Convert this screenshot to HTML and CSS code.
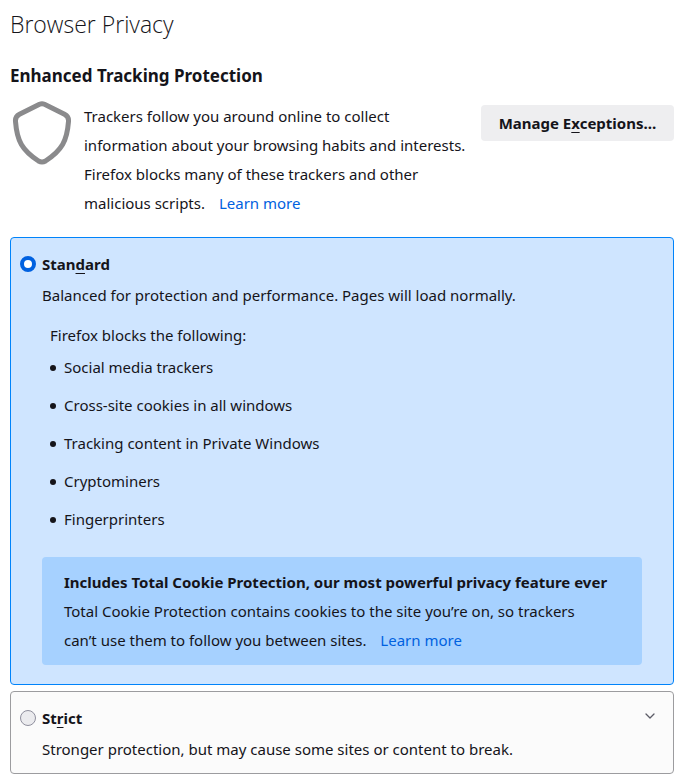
FILE: index.html
```html
<!DOCTYPE html>
<html lang="en">
<head>
<meta charset="utf-8">
<meta name="viewport" content="width=device-width, initial-scale=1">
<title>Browser Privacy</title>
<link rel="stylesheet" href="styles.css">
</head>
<body>
<main class="page">
  <h1 class="title">Browser Privacy</h1>
  <h2 class="subtitle">Enhanced Tracking Protection</h2>
  <section class="intro">
    <svg class="shield" viewBox="0 0 64 64" aria-hidden="true">
      <path d="M29.500 3.200 9.500 13.200Q5 15.500 5.500 20.500C7 40 12 49 28.500 60Q32 62 35.500 60C52 49 57 40 58.500 20.500Q59 15.500 54.500 13.200L34.500 3.200Q32 2.200 29.500 3.200Z"/>
    </svg>
    <p class="text">Trackers follow you around online to collect information about your browsing habits and interests. Firefox blocks many of these trackers and other malicious scripts. <a class="link" href="#">Learn more</a></p>
    <button class="button" type="button">Manage E<u>x</u>ceptions…</button>
  </section>
  <section class="card selected">
    <div class="choice">
      <input class="radio" type="radio" name="level" id="standard" checked>
      <label class="label" for="standard">Stan<u>d</u>ard</label>
    </div>
    <div class="body">
      <p class="text">Balanced for protection and performance. Pages will load normally.</p>
      <p class="text lead">Firefox blocks the following:</p>
      <ul class="list">
        <li>Social media trackers</li>
        <li>Cross-site cookies in all windows</li>
        <li>Tracking content in Private Windows</li>
        <li>Cryptominers</li>
        <li>Fingerprinters</li>
      </ul>
      <div class="notice">
        <h3 class="notice-title">Includes Total Cookie Protection, our most powerful privacy feature ever</h3>
        <p class="text">Total Cookie Protection contains cookies to the site you’re on, so trackers can’t use them to follow you between sites. <a class="link" href="#">Learn more</a></p>
      </div>
    </div>
  </section>
  <section class="card">
    <div class="choice">
      <input class="radio" type="radio" name="level" id="strict">
      <label class="label" for="strict">St<u>r</u>ict</label>
      <button class="expander" type="button" aria-label="Show details">
        <svg class="chevron" viewBox="0 0 16 16" aria-hidden="true"><path d="M4 6l4 4 4-4"/></svg>
      </button>
    </div>
    <div class="body">
      <p class="text">Stronger protection, but may cause some sites or content to break.</p>
    </div>
  </section>
</main>
</body>
</html>
```
FILE: styles.css
```css
* { box-sizing: border-box; }
body {
  margin: 0;
  background: #fff;
  color: #15141a;
  font: 15px/29px "Noto Sans", sans-serif;
}
h1, h2, h3, p, ul { margin: 0; }
u { text-decoration-thickness: 1px; text-underline-offset: 3px; text-decoration-skip-ink: none; }
.page { padding: 8px 10px 5px; }
.title { font-family: "Open Sans", "Noto Sans", sans-serif; font-size: 23px; font-weight: 300; line-height: 32px; }
.subtitle { margin-top: 21px; font-size: 17px; font-weight: 700; line-height: 30px; }
.intro { display: flex; align-items: flex-start; padding-top: 11px; }
.intro .text { flex: 1; min-width: 0; }
.shield { flex: none; width: 64px; height: 64px; margin: -1px 10px 0 0; }
.shield path { fill: none; stroke: #8a8a8c; stroke-width: 5; }
.link { margin-left: 10px; color: #0061e0; text-decoration: none; }
.button {
  flex: none;
  margin: 3px 0 0 10px;
  padding: 0 16px;
  min-width: 193px;
  height: 36px;
  border: 0;
  border-radius: 4px;
  background: #eeeef0;
  color: inherit;
  font: 700 15px/36px "Noto Sans", sans-serif;
}
.card {
  margin-top: 6px;
  padding: 12px 31px 9px;
  border: 1px solid #9c9c9f;
  border-radius: 4px;
  background: #fbfbfb;
}
.selected {
  margin-top: 19px;
  padding-bottom: 19px;
  border-color: #0083fa;
  background: #cfe5ff;
}
.choice { display: flex; align-items: center; margin: 0 -22px 2px; }
.radio {
  appearance: none;
  width: 16px;
  height: 16px;
  margin: 0 6px 2px 0;
  border: 1px solid #8f8f9d;
  border-radius: 50%;
  background: #ebebee;
}
.radio:checked { border: 5px solid #0061e0; border-width: 4px; background: #fff; }
.label { flex: 1; font-weight: 700; }
.expander { display: flex; padding: 0; margin: 0 6px 6px 0; border: 0; background: none; }
.chevron { width: 16px; height: 16px; }
.chevron path { fill: none; stroke: #5b5b66; stroke-width: 1.3; stroke-linecap: round; stroke-linejoin: round; }
.lead { margin: 11px 0 3px 8px; }
.list { display: grid; gap: 9px; padding: 0; list-style: none; }
.list li { display: flex; align-items: center; gap: 8px; padding-left: 8px; }
.list li::before { content: ""; width: 6px; height: 6px; border-radius: 50%; background: currentColor; }
.notice { margin-top: 23px; padding: 11px 22px 10px; border-radius: 4px; background: #a6d1ff; }
.notice .text { padding-right: 16px; }
.notice-title { font-size: 15px; font-weight: 700; line-height: 29px; }
```
